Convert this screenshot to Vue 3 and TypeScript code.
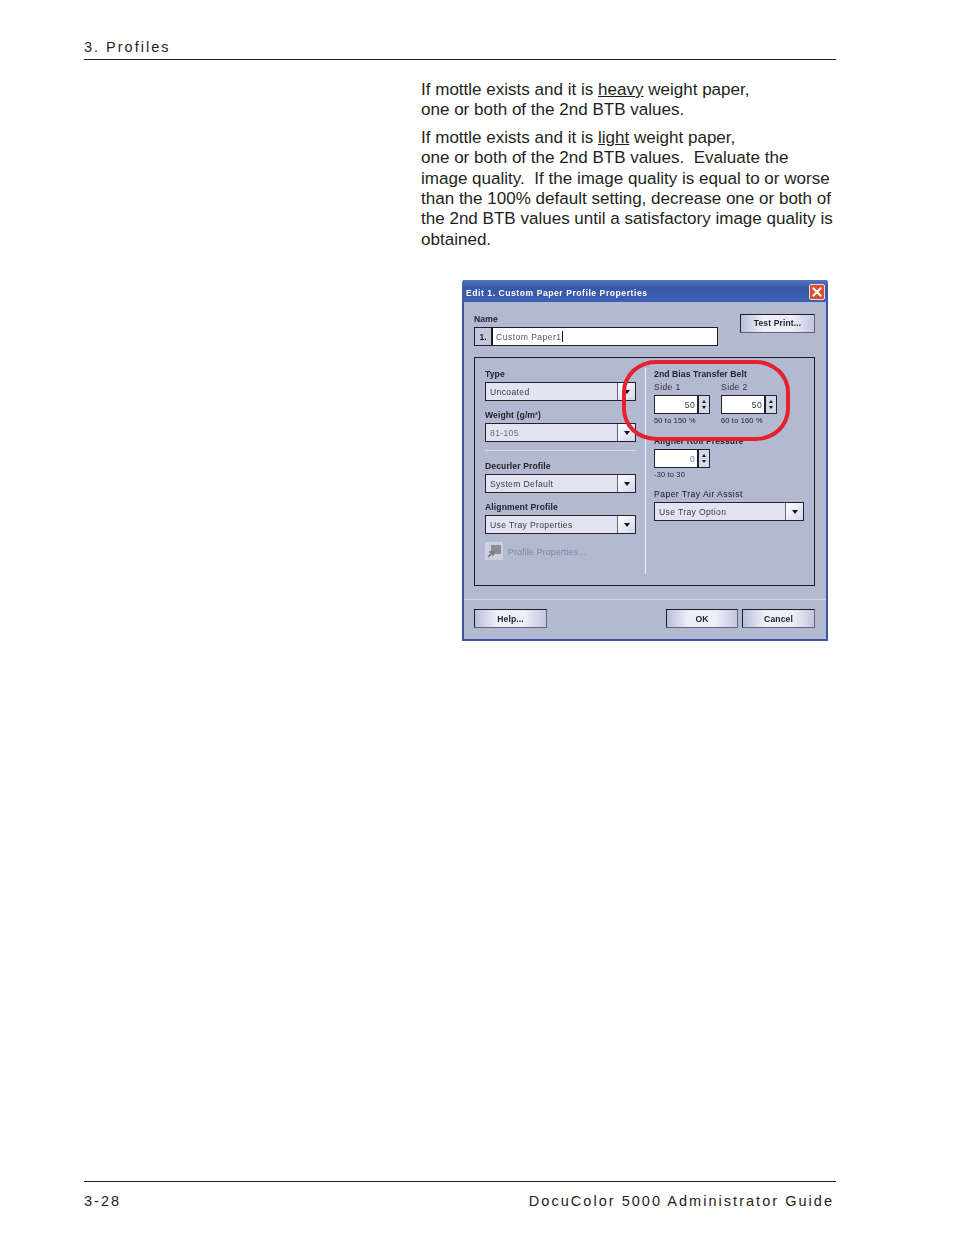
<script setup lang="ts">
interface Field { label: string; value: string; disabled?: boolean }
const upper: Field[] = [
  { label: 'Type', value: 'Uncoated' },
  { label: 'Weight (g/m²)', value: '81-105', disabled: true },
]
const lower: Field[] = [
  { label: 'Decurler Profile', value: 'System Default' },
  { label: 'Alignment Profile', value: 'Use Tray Properties' },
]
const sides = [
  { label: 'Side 1', value: '50', range: '50 to 150 %' },
  { label: 'Side 2', value: '50', range: '60 to 160 %' },
]
</script>

<template>
  <div class="page">
    <header class="running-head">3. Profiles</header>
    <main class="content">
      <p class="para first">If mottle exists and it is <u>heavy</u> weight paper,<br />one or both of the 2nd BTB values.</p>
      <p class="para second">If mottle exists and it is <u>light</u> weight paper,<br />one or both of the 2nd BTB values.&nbsp; Evaluate the<br />image quality.&nbsp; If the image quality is equal to or worse<br />than the 100% default setting, decrease one or both of<br />the 2nd BTB values until a satisfactory image quality is<br />obtained.</p>

      <section class="dialog">
        <div class="titlebar">
          <span class="title">Edit 1. Custom Paper Profile Properties</span>
          <span class="close">
            <svg width="14" height="14" viewBox="0 0 14 14"><path d="M3.5 3.5l7 7M10.5 3.5l-7 7" stroke="#fff" stroke-width="2" stroke-linecap="square" /></svg>
          </span>
        </div>
        <div class="body">
          <div class="name-row">
            <div class="name-block">
              <div class="label name-label">Name</div>
              <div class="name-field">
                <span class="index">1.</span>
                <span class="name-input">Custom Paper1<i class="caret"></i></span>
              </div>
            </div>
            <button class="btn test">Test Print...</button>
          </div>

          <div class="panel">
            <div class="col-left">
              <div v-for="f in upper" :key="f.label" class="field">
                <div class="label">{{ f.label }}</div>
                <div class="select" :class="{ off: f.disabled }">
                  <span class="value">{{ f.value }}</span>
                  <span class="arrow"><b></b></span>
                </div>
              </div>
              <div class="rule"></div>
              <div v-for="f in lower" :key="f.label" class="field">
                <div class="label">{{ f.label }}</div>
                <div class="select">
                  <span class="value">{{ f.value }}</span>
                  <span class="arrow"><b></b></span>
                </div>
              </div>
              <div class="props">
                <span class="props-icon">
                  <svg width="18" height="18" viewBox="0 0 18 18">
                    <rect x="6" y="3" width="10" height="9" fill="#8d8d8d" />
                    <path d="M3 15l5-5M4 10h4v4" fill="none" stroke="#6f7480" stroke-width="1.6" />
                  </svg>
                </span>
                <span class="props-text">Profile Properties...</span>
              </div>
            </div>
            <div class="vline"></div>
            <div class="col-right">
              <div class="label heading">2nd Bias Transfer Belt</div>
              <div class="sides">
                <div v-for="s in sides" :key="s.label" class="side">
                  <div class="plain">{{ s.label }}</div>
                  <div class="spin">
                    <span class="spin-val">{{ s.value }}</span>
                    <span class="spin-btns"><b class="up"></b><b class="down"></b></span>
                  </div>
                  <div class="range">{{ s.range }}</div>
                </div>
              </div>
              <div class="label aligner">Aligner Roll Pressure</div>
              <div class="spin muted">
                <span class="spin-val">0</span>
                <span class="spin-btns"><b class="up"></b><b class="down"></b></span>
              </div>
              <div class="range neg">-30 to 30</div>
              <div class="label air">Paper Tray Air Assist</div>
              <div class="select wide">
                <span class="value">Use Tray Option</span>
                <span class="arrow"><b></b></span>
              </div>
            </div>
          </div>

          <div class="footer">
            <button class="btn help">Help...</button>
            <div class="actions">
              <button class="btn">OK</button>
              <button class="btn">Cancel</button>
            </div>
          </div>
        </div>
        <div class="highlight"></div>
      </section>
    </main>
    <footer class="running-foot">
      <span>3-28</span>
      <span>DocuColor 5000 Administrator Guide</span>
    </footer>
  </div>
</template>

<style>
html, body { margin: 0; background: #fff; }
</style>

<style scoped>
.page {
  width: 954px;
  height: 1235px;
  box-sizing: border-box;
  padding: 38px 118px 0 84px;
  display: flex;
  flex-direction: column;
  font-family: "Liberation Sans", Arial, sans-serif;
  color: #231f20;
  overflow: hidden;
}
.running-head {
  line-height: 18px;
  font-size: 14.5px;
  letter-spacing: 2px;
  border-bottom: 1px solid #231f20;
  box-sizing: border-box;
  height: 22px;
}
.content { padding-left: 337px; flex: 1; }
.para { margin: 0; font-size: 17.05px; line-height: 20.4px; white-space: nowrap; }
.first { margin-top: 20px; }
.second { margin-top: 7px; }
.dialog {
  position: relative;
  margin: 30px 0 0 41px;
  width: 366px;
  height: 361px;
  box-sizing: border-box;
  border: 2px solid #3d55a5;
  border-top: 0;
  background: #b2b9d1;
  font-size: 8.6px;
  border-radius: 3px 3px 0 0;
  filter: blur(0.3px);
}
.titlebar {
  height: 22px;
  margin: 0 -2px;
  padding: 2px 3px 0 4px;
  box-sizing: border-box;
  display: flex;
  align-items: center;
  justify-content: space-between;
  background: linear-gradient(#5473bd, #3658ab 40%, #3e5fb2);
  color: #fff;
  font-weight: bold;
  letter-spacing: 0.54px;
  border-radius: 3px 3px 0 0;
}
.title { padding-top: 1px; }
.close {
  width: 16px;
  height: 16px;
  box-sizing: border-box;
  display: flex;
  align-items: center;
  justify-content: center;
  background: #dd4f30;
  border: 1px solid #f4d8cf;
  border-radius: 2px;
}
.body { padding: 0 11px 0 10px; }
.name-row {
  display: flex;
  justify-content: space-between;
  align-items: flex-start;
  padding-top: 12px;
}
.name-block { width: 244px; }
.name-label { height: 14px; line-height: 10px; box-sizing: border-box; }
.label { font-weight: bold; color: #23242c; line-height: 11px; letter-spacing: 0.1px; }
.name-field { display: flex; height: 19px; margin-top: -1px; }
.index {
  width: 18px;
  box-sizing: border-box;
  border: 1px solid #1e1e26;
  text-align: center;
  line-height: 18px;
  font-weight: bold;
  background: #c2c8da;
}
.name-input {
  flex: 1;
  box-sizing: border-box;
  border: 1px solid #1e1e26;
  background: #fff;
  padding-left: 3px;
  line-height: 18px;
  letter-spacing: 0.45px;
  color: #555;
}
.caret { display: inline-block; width: 1px; height: 11px; background: #111; vertical-align: -2px; }
.btn {
  width: 75px;
  height: 19px;
  padding: 0;
  border: 1px solid #1e1e26;
  border-right-color: #5d6480;
  border-bottom-color: #5d6480;
  background: linear-gradient(90deg, #b9bedb, #eeeef8 30%, #eeeef8 70%, #c3c7e0);
  font: bold 8.6px "Liberation Sans", Arial, sans-serif;
  letter-spacing: 0.1px;
  color: #23242c;
}
.test { padding-bottom: 2px; }
.panel {
  display: flex;
  height: 229px;
  margin-top: 11px;
  box-sizing: border-box;
  border: 1px solid #1e1e26;
  padding: 10px 0 0 10px;
}
.col-left { width: 151px; }
.field { margin-bottom: 8px; }
.field .label { height: 14px; line-height: 13px; }
.heading { height: 11px; line-height: 13px; }
.select {
  display: flex;
  height: 19px;
  box-sizing: border-box;
  border: 1px solid #20222e;
  background: #e3e3f2;
}
.value {
  flex: 1;
  padding-left: 4px;
  line-height: 19px;
  letter-spacing: 0.35px;
  color: #3a3a42;
  white-space: nowrap;
}
.off .value { color: #6a6e80; }
.arrow {
  width: 17px;
  border-left: 1px solid #5d6480;
  background: linear-gradient(135deg, #fff, #d3d6e8);
  display: flex;
  align-items: center;
  justify-content: center;
}
.arrow b {
  width: 0;
  height: 0;
  border-left: 3.5px solid transparent;
  border-right: 3.5px solid transparent;
  border-top: 4px solid #14141c;
}
.rule { height: 1px; background: #d7dbe8; margin: 0 0 9px; }
.props { display: flex; align-items: center; gap: 5px; margin-top: 2px; }
.props-icon {
  width: 18px;
  height: 18px;
  background: #ccd0e0;
  display: flex;
}
.props-text { color: #7f869f; letter-spacing: 0.25px; padding-top: 2px; }
.vline { width: 1px; height: 206px; margin-left: 9px; background: #eef0f6; }
.col-right { margin-left: 8px; width: 151px; }
.sides { display: flex; gap: 11px; margin-top: 3px; }
.side { width: 56px; }
.plain { height: 13px; line-height: 11px; letter-spacing: 0.4px; color: #33343c; }
.spin { display: flex; width: 56px; height: 19px; box-sizing: border-box; border: 1px solid #20222e; background: #fff; }
.spin-val { flex: 1; text-align: right; padding-right: 2px; line-height: 19px; letter-spacing: 0.3px; color: #33343c; }
.muted .spin-val { color: #777; }
.spin-btns {
  width: 12px;
  background: #d5d8e8;
  border-left: 2px solid #20222e;
  box-sizing: border-box;
  display: flex;
  flex-direction: column;
  align-items: center;
  justify-content: space-between;
  padding: 4px 0;
}
.spin-btns b { width: 0; height: 0; border-left: 2.5px solid transparent; border-right: 2.5px solid transparent; }
.up { border-bottom: 3px solid #14141c; }
.down { border-top: 3px solid #14141c; }
.range { font-size: 7.4px; line-height: 10px; margin-top: 2px; letter-spacing: 0.2px; color: #23242c; white-space: nowrap; }
.aligner { margin-top: 10px; height: 13px; letter-spacing: 0.1px; white-space: nowrap; }
.neg { margin-top: 2px; }
.air { margin-top: 9px; height: 13px; font-weight: normal; letter-spacing: 0.45px; color: #16161c; }
.wide { width: 150px; }
.footer {
  display: flex;
  justify-content: space-between;
  margin: 13px -11px 0 -10px;
  padding: 9px 11px 0 10px;
  border-top: 1px solid #d0d4e2;
}
.help { width: 73px; }
.actions { display: flex; gap: 4px; }
.actions .btn { width: 73px; }
.actions .btn:first-child { width: 72px; }
.highlight {
  position: absolute;
  left: 158px;
  top: 80px;
  width: 168px;
  height: 81px;
  box-sizing: border-box;
  border: 4px solid #e3212f;
  border-radius: 34px / 32px;
}
.running-foot {
  margin-bottom: 25px;
  height: 29px;
  box-sizing: border-box;
  padding: 10px 2px 0 0;
  border-top: 1px solid #231f20;
  display: flex;
  justify-content: space-between;
  font-size: 14.5px;
  line-height: 18px;
  letter-spacing: 2.03px;
}
</style>
